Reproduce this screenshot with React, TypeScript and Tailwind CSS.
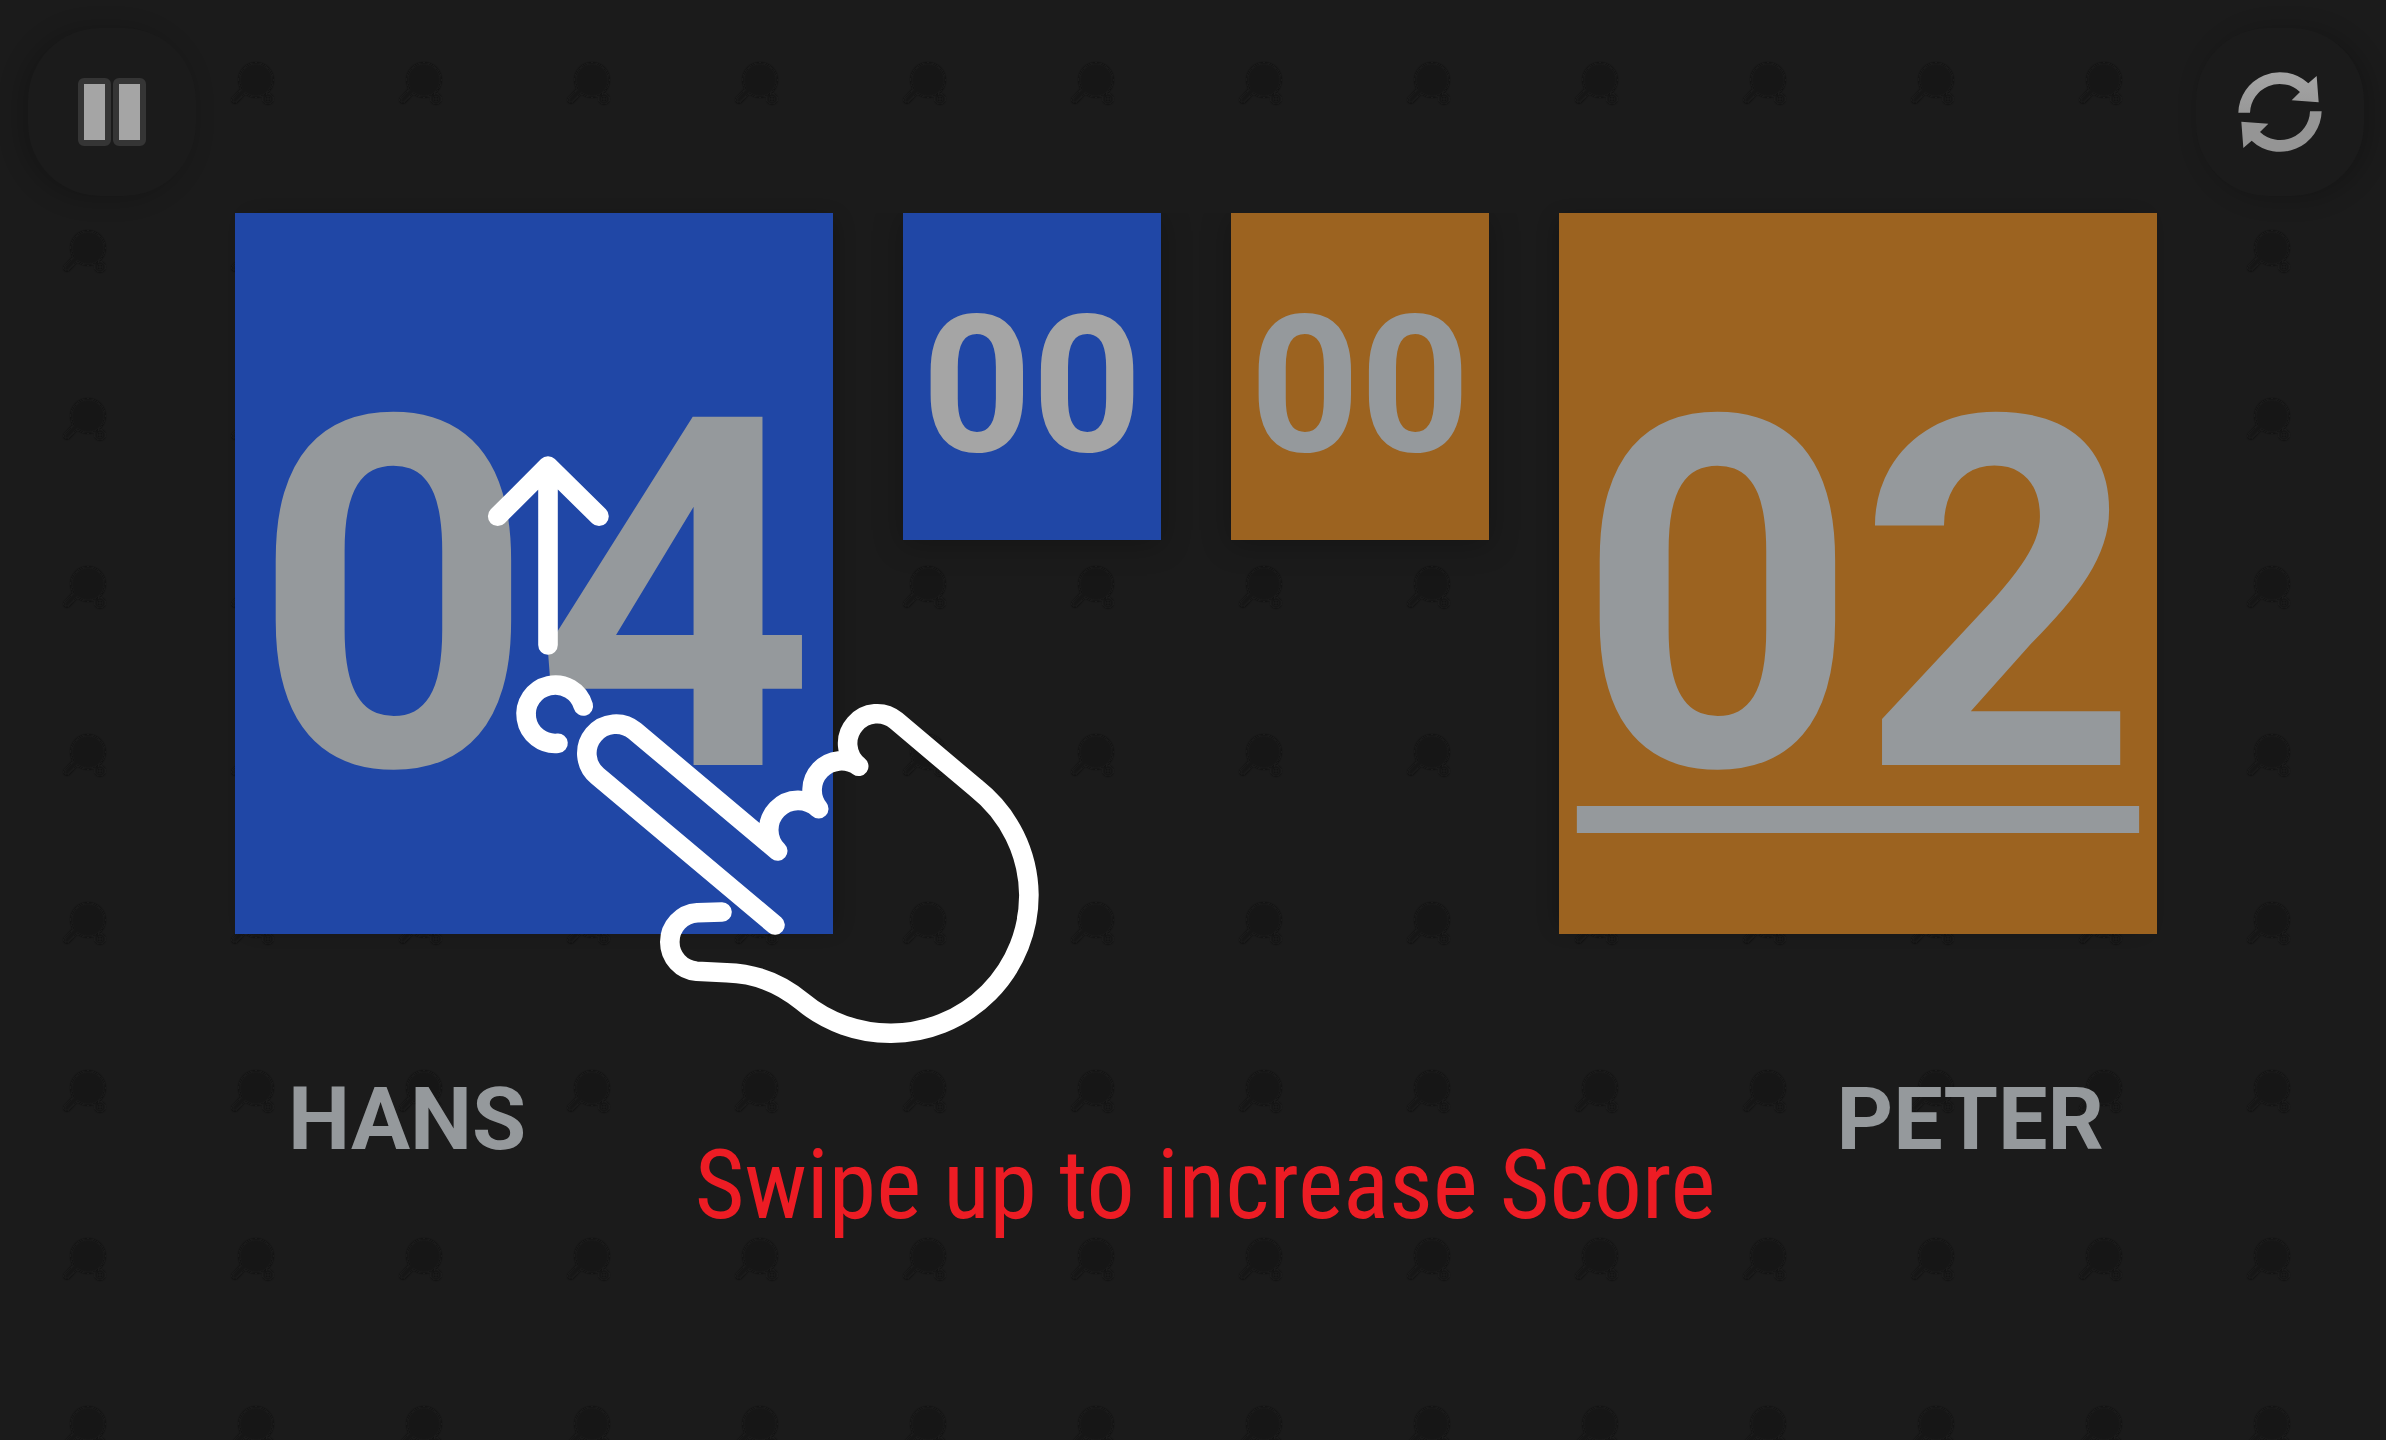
function DotPattern() {
  return (
    <svg className="pointer-events-none absolute inset-0 h-full w-full" aria-hidden="true">
      <defs>
        <filter id="soft" x="-20%" y="-20%" width="140%" height="140%">
          <feGaussianBlur stdDeviation="1.2" />
        </filter>
        <pattern id="pegs" width="168" height="168" patternUnits="userSpaceOnUse">
          <g filter="url(#soft)">
            <path d="M78 88 67 100" stroke="#181818" strokeWidth="6" strokeLinecap="round" />
            <circle cx="100" cy="99" r="4" fill="none" stroke="#191919" strokeWidth="2" />
            <circle cx="88" cy="80" r="17" fill="#141414" />
          </g>
        </pattern>
      </defs>
      <rect width="100%" height="100%" fill="url(#pegs)" />
    </svg>
  );
}

function PauseButton() {
  return (
    <button
      type="button"
      aria-label="Pause"
      className="flex size-[168px] items-center justify-center gap-0.5 rounded-[72px] bg-[#1b1b1b] shadow-[-6px_2px_24px_rgba(0,0,0,0.22)]"
    >
      <span className="h-[68px] w-[33px] rounded-md border-6 border-[#353535] bg-[#a5a5a5]" />
      <span className="h-[68px] w-[33px] rounded-md border-6 border-[#353535] bg-[#a5a5a5]" />
    </button>
  );
}

function ResetButton() {
  const arrow = "M-125 2A125 125 0 0 1 85 -86L110 -108L116 -29L35 -35L60 -60A89 89 0 0 0 -90 2Z";
  return (
    <button
      type="button"
      aria-label="Reset"
      className="flex size-[168px] items-center justify-center rounded-[72px] bg-[#1b1b1b] shadow-[6px_2px_24px_rgba(0,0,0,0.22)]"
    >
      <svg viewBox="-126 -126 252 252" className="size-[84px]" aria-hidden="true">
        <defs>
          <linearGradient id="metal" gradientUnits="userSpaceOnUse" x1="0" y1="-125" x2="0" y2="125">
            <stop offset="0" stopColor="#a5a5a5" />
            <stop offset="1" stopColor="#8c8c8c" />
          </linearGradient>
        </defs>
        <path d={arrow} fill="url(#metal)" />
        <path d={arrow} fill="#959595" transform="rotate(180)" />
      </svg>
    </button>
  );
}

function SwipeHand() {
  return (
    <svg
      viewBox="235 213 820 840"
      className="pointer-events-none absolute top-0 left-0 z-20 h-[840px] w-[820px] max-w-none"
      fill="none"
      stroke="#fff"
      strokeWidth="19.6"
      strokeLinecap="round"
      strokeLinejoin="round"
      aria-hidden="true"
    >
      <path d="M548 645V466M497.7 516.3L548 466L599 516.3" />
      <path d="M583.3 706A29.2 29.2 0 1 0 558 743.3" />
      <path d="M775 925L597.3 775.7A29.2 29.2 0 0 1 593.6 734.6A29.2 29.2 0 0 1 634.7 730.9L777.7 851A29.4 29.4 0 0 1 818.7 808.7A29.4 29.4 0 0 1 858.7 766.3A29.2 29.2 0 0 1 855 724A29.2 29.2 0 0 1 896 720.6L976.3 788.3A138 138 0 0 1 1028.9 895A138 138 0 0 1 891.3 1033.2A138 138 0 0 1 802 1001.3C780 983 755 973.4 726.7 972.7L696.7 971.3A29.3 29.3 0 0 1 669.8 942A29.3 29.3 0 0 1 697.3 912.7L722 912" />
    </svg>
  );
}

export default function App() {
  return (
    <main className="relative min-h-screen overflow-hidden bg-[#1b1b1b] font-[Roboto,sans-serif] font-bold text-[#95999c]">
      <DotPattern />

      <header className="relative flex justify-between pt-7 pr-[22px] pl-7">
        <PauseButton />
        <ResetButton />
      </header>

      <div className="relative pr-[229px] pl-[235px]">
        <section
          aria-label="Scoreboard"
          className="mt-[17px] grid grid-cols-[598fr_258fr_258fr_598fr] items-start gap-[70px] text-center"
        >
          <div className="relative bg-[#2047a6] pt-24 pb-12 shadow-[8px_0_20px_-8px_rgba(0,0,0,0.3)]">
            <p className="text-[490px] leading-[577px]">04</p>
            <SwipeHand />
          </div>
          <div className="bg-[#2047a6] pt-[60px] pb-[42px] shadow-[0_4px_28px_rgba(0,0,0,0.25)] [clip-path:inset(0_-40px_-40px_-40px)]">
            <p className="text-[192px] leading-[225px] text-[#a5a5a5]">00</p>
          </div>
          <div className="bg-[#9c6320] pt-[60px] pb-[42px] shadow-[0_4px_28px_rgba(0,0,0,0.25)] [clip-path:inset(0_-40px_-40px_-40px)]">
            <p className="text-[192px] leading-[225px]">00</p>
          </div>
          <div className="bg-[#9c6320] pt-24 pb-12 shadow-[-8px_0_20px_-8px_rgba(0,0,0,0.3)]">
            <p className="text-[490px] leading-[577px] underline decoration-[27px] underline-offset-[41px] [text-decoration-skip-ink:none]">
              02
            </p>
          </div>
        </section>

        <div className="mt-[133px] flex justify-between px-[53px] text-[88px] leading-[104px]">
          <h2>HANS</h2>
          <h2>PETER</h2>
        </div>
      </div>

      <p
        role="status"
        className="pointer-events-none absolute inset-x-0 top-[1129px] pl-6 text-center font-['Roboto_Condensed',Roboto,sans-serif] text-[96px] leading-[112px] font-normal text-[#ed1c24]"
      >
        Swipe up to increase Score
      </p>
    </main>
  );
}
